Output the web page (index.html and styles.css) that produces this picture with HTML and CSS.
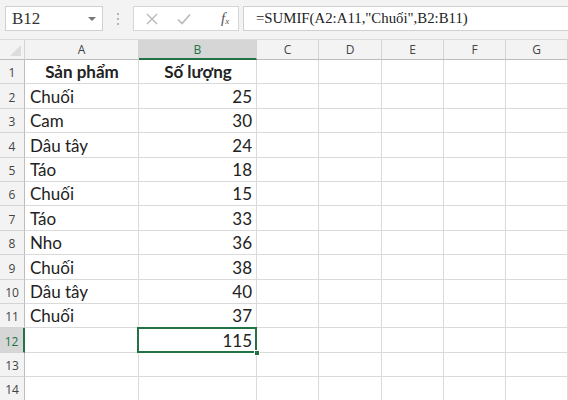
FILE: index.html
```html
<!DOCTYPE html>
<html>
<head>
<meta charset="utf-8">
<link rel="stylesheet" href="styles.css">
</head>
<body>
<div class="app">
  <div class="toolbar">
    <div class="namebox"><span class="ref">B12</span><span class="caret"></span></div>
    <div class="dots"><i></i><i></i><i></i></div>
    <div class="fbtns">
      <svg class="ico" width="14" height="14" viewBox="0 0 14 14"><path d="M2 2L12 12M12 2L2 12" stroke="#b9b9b9" stroke-width="1.4" fill="none"/></svg>
      <svg class="ico" width="16" height="14" viewBox="0 0 16 14"><path d="M2 7.5L6 11.5L14 2.5" stroke="#b9b9b9" stroke-width="1.6" fill="none"/></svg>
      <span class="fx">f<sub>x</sub></span>
    </div>
    <div class="formula">=SUMIF(A2:A11,"Chuối",B2:B11)</div>
  </div>
  <div class="sheet">
    <div class="corner"><span class="tri"></span></div>
    <div class="ch">A</div><div class="ch sel">B</div><div class="ch">C</div><div class="ch">D</div><div class="ch">E</div><div class="ch">F</div><div class="ch">G</div>

    <div class="rh">1</div><div class="c b ctr">Sản phẩm</div><div class="c b ctr">Số lượng</div><div class="c"></div><div class="c"></div><div class="c"></div><div class="c"></div><div class="c"></div>
    <div class="rh">2</div><div class="c">Chuối</div><div class="c num">25</div><div class="c"></div><div class="c"></div><div class="c"></div><div class="c"></div><div class="c"></div>
    <div class="rh">3</div><div class="c">Cam</div><div class="c num">30</div><div class="c"></div><div class="c"></div><div class="c"></div><div class="c"></div><div class="c"></div>
    <div class="rh">4</div><div class="c">Dâu tây</div><div class="c num">24</div><div class="c"></div><div class="c"></div><div class="c"></div><div class="c"></div><div class="c"></div>
    <div class="rh">5</div><div class="c">Táo</div><div class="c num">18</div><div class="c"></div><div class="c"></div><div class="c"></div><div class="c"></div><div class="c"></div>
    <div class="rh">6</div><div class="c">Chuối</div><div class="c num">15</div><div class="c"></div><div class="c"></div><div class="c"></div><div class="c"></div><div class="c"></div>
    <div class="rh">7</div><div class="c">Táo</div><div class="c num">33</div><div class="c"></div><div class="c"></div><div class="c"></div><div class="c"></div><div class="c"></div>
    <div class="rh">8</div><div class="c">Nho</div><div class="c num">36</div><div class="c"></div><div class="c"></div><div class="c"></div><div class="c"></div><div class="c"></div>
    <div class="rh">9</div><div class="c">Chuối</div><div class="c num">38</div><div class="c"></div><div class="c"></div><div class="c"></div><div class="c"></div><div class="c"></div>
    <div class="rh">10</div><div class="c">Dâu tây</div><div class="c num">40</div><div class="c"></div><div class="c"></div><div class="c"></div><div class="c"></div><div class="c"></div>
    <div class="rh">11</div><div class="c">Chuối</div><div class="c num">37</div><div class="c"></div><div class="c"></div><div class="c"></div><div class="c"></div><div class="c"></div>
    <div class="rh sel">12</div><div class="c"></div><div class="c num active">115<span class="handle"></span></div><div class="c"></div><div class="c"></div><div class="c"></div><div class="c"></div><div class="c"></div>
    <div class="rh">13</div><div class="c"></div><div class="c"></div><div class="c"></div><div class="c"></div><div class="c"></div><div class="c"></div><div class="c"></div>
    <div class="rh">14</div><div class="c"></div><div class="c"></div><div class="c"></div><div class="c"></div><div class="c"></div><div class="c"></div><div class="c"></div>
  </div>
</div>
</body>
</html>
```

FILE: styles.css
```css
* { box-sizing: border-box; }
html, body { margin: 0; padding: 0; }
body { width: 568px; height: 400px; overflow: hidden; background: #fff; }
.app { width: 568px; height: 400px; overflow: hidden; }

.toolbar {
  height: 40px;
  background: #f3f3f3;
  display: flex;
  align-items: flex-start;
  padding: 6px 0 0 5px;
  border-bottom: 1px solid #dadada;
}
.namebox {
  width: 98px; height: 25px;
  background: #fff;
  border: 1px solid #d0d0d0;
  display: flex; align-items: center; justify-content: space-between;
  padding: 0 6px 0 6px;
  font-family: "Liberation Serif", "DejaVu Serif", serif;
  font-size: 17px; color: #333;
}
.caret {
  width: 0; height: 0;
  border-left: 4px solid transparent; border-right: 4px solid transparent;
  border-top: 4px solid #777;
}
.dots {
  width: 30px; height: 25px;
  display: flex; flex-direction: column; align-items: center; justify-content: center; gap: 3px;
}
.dots i { display: block; width: 2px; height: 2px; background: #b5b5b5; }
.fbtns {
  width: 106px; height: 25px;
  background: #fff;
  border: 1px solid #d6d6d6;
  display: flex; align-items: center;
  padding-left: 11px; gap: 17px;
}
.fx {
  font-family: "Liberation Serif", serif; font-style: italic;
  font-size: 15px; color: #555; margin-left: 12px;
}
.fx sub { font-size: 9px; vertical-align: -1px; }
.formula {
  flex: 1; height: 25px; margin-left: 4px;
  background: #fff;
  border: 1px solid #d0d0d0; border-right: none;
  padding-left: 12px;
  display: flex; align-items: center;
  font-family: "Liberation Serif", serif;
  font-size: 14.8px; color: #222;
  white-space: nowrap;
}

.sheet {
  display: grid;
  grid-template-columns: 25px 114px 118px 62px 63px 62px 62px 62px;
  grid-template-rows: 20px repeat(14, 24.4px);
}
.corner {
  background: #f3f3f3;
  border-right: 1px solid #d4d4d4;
  border-bottom: 1px solid #bdbdbd;
  position: relative;
}
.tri {
  position: absolute; right: 3px; bottom: 3px;
  width: 0; height: 0;
  border-left: 11px solid transparent;
  border-bottom: 11px solid #dcdcdc;
}
.ch {
  background: #f3f3f3;
  border-right: 1px solid #d4d4d4;
  border-bottom: 1px solid #bdbdbd;
  display: flex; align-items: center; justify-content: center;
  font-family: "Open Sans", "Liberation Sans", sans-serif;
  font-size: 12px; color: #444;
}
.ch.sel {
  background: #d6d6d6; color: #217346;
  border-bottom: 2px solid #217346;
}
.rh {
  background: #f3f3f3;
  border-right: 1px solid #bdbdbd;
  border-bottom: 1px solid #d4d4d4;
  display: flex; align-items: flex-end; justify-content: center;
  padding-bottom: 2px;
  font-family: "Open Sans", "Liberation Sans", sans-serif;
  font-size: 12px; color: #444;
}
.rh.sel {
  background: #d6d6d6; color: #217346;
  border-right: 2px solid #217346;
}
.c {
  border-right: 1px solid #dadada;
  border-bottom: 1px solid #dadada;
  display: flex; align-items: flex-end;
  padding: 0 4px 1px 5px;
  font-family: Lato, "Liberation Sans", sans-serif;
  font-size: 17px; color: #222;
  white-space: nowrap;
}
.c.b { font-weight: bold; }
.c.ctr { justify-content: center; }
.c.num { justify-content: flex-end; }
.c.active { position: relative; }
.c.active::after {
  content: "";
  position: absolute; left: -2px; top: -1px; right: -1px; bottom: -1px;
  border: 2px solid #217346;
}
.handle {
  position: absolute; right: -4px; bottom: -4px;
  width: 6px; height: 6px;
  background: #217346;
  border: 1px solid #fff;
  z-index: 2;
}
```
